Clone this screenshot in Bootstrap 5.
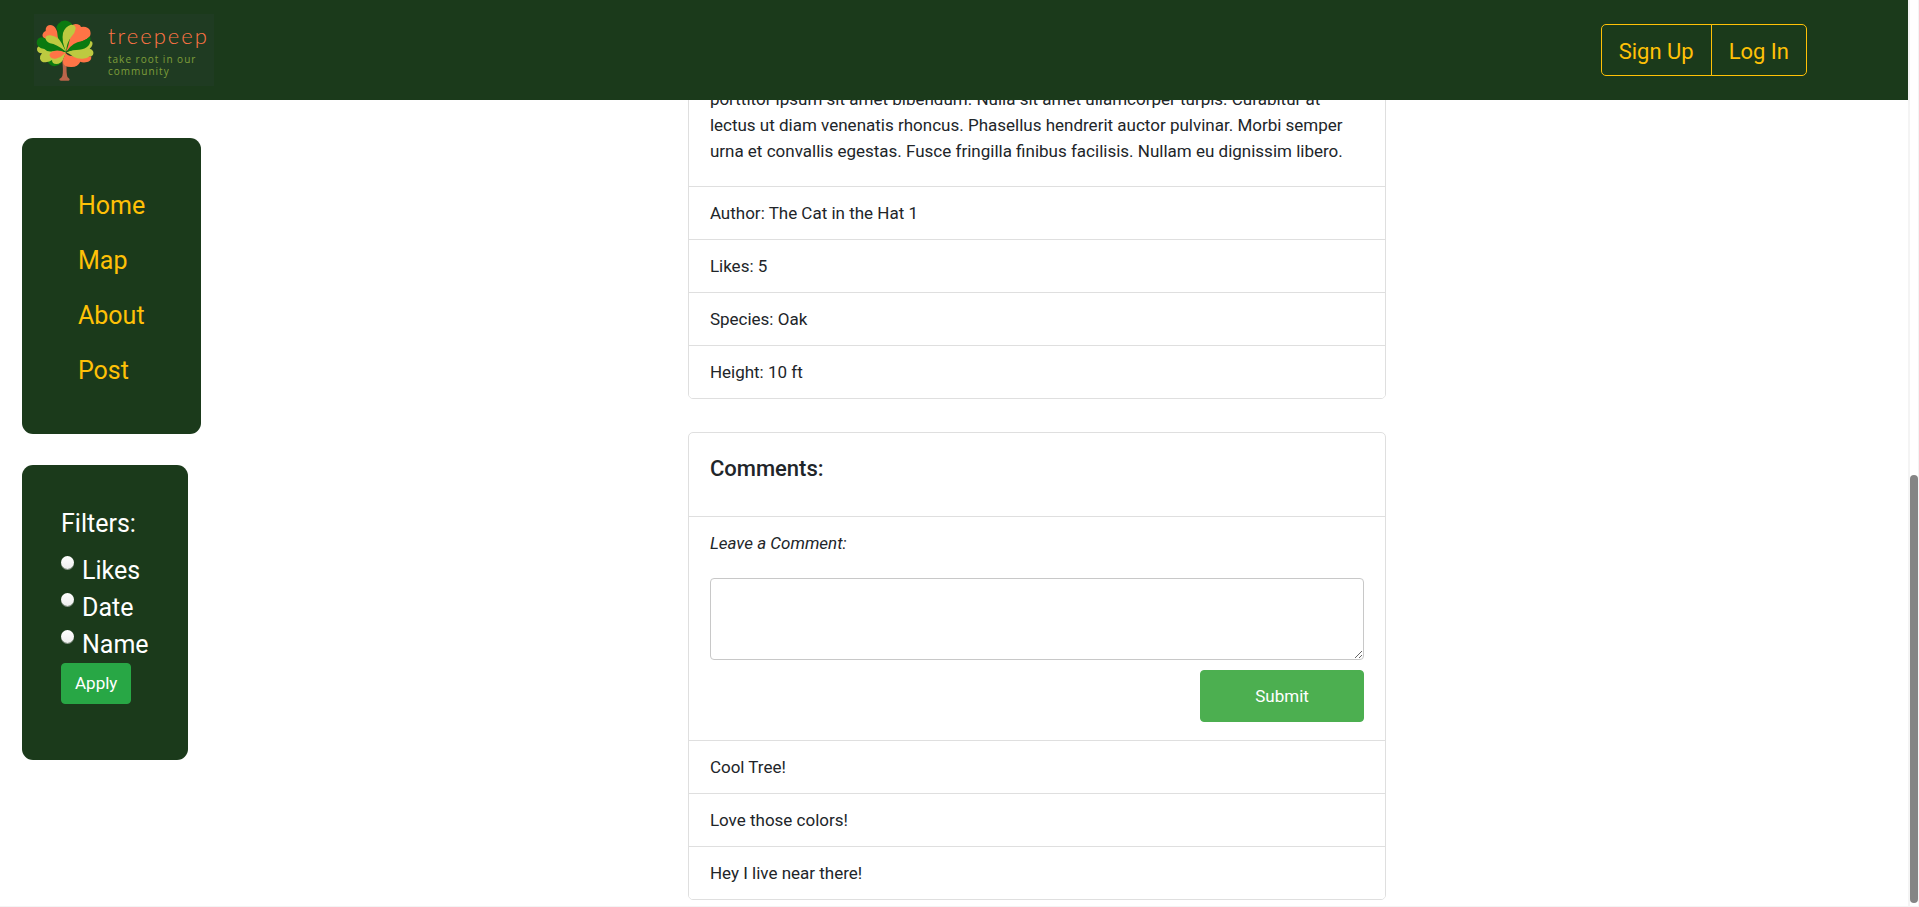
<!DOCTYPE html>
<html lang="en">
<head>
<meta charset="utf-8">
<meta name="viewport" content="width=device-width, initial-scale=1">
<title>treepeep</title>
<link href="https://cdn.jsdelivr.net/npm/bootstrap@5.3.0/dist/css/bootstrap.min.css" rel="stylesheet">
<style>
  body { font-family: Roboto, "Liberation Sans", sans-serif; font-size: 17px; line-height: 26px; color: #212529; }
  .forest { background: #1b3a1b; }
  .page-shell { border-bottom: 1px solid #f4f4f4; }
  .site-header { height: 100px; padding: 0 101px 0 34px; }
  .brand-box { width: 180px; height: 72px; background: #1f3b22; padding-left: 2px; gap: 13px; text-decoration: none; }
  .brand-name { font: 300 22px/26px Lato, sans-serif; letter-spacing: 2px; color: #ff7446; }
  .brand-tag { font: 10px/12px "Open Sans", sans-serif; letter-spacing: 1px; color: #7f9f3a; }
  .btn-account { --bs-btn-color: #ffc107; --bs-btn-border-color: #ffc107; --bs-btn-hover-bg: #ffc107; --bs-btn-hover-border-color: #ffc107;
    --bs-btn-font-size: 22px; --bs-btn-line-height: 32px; --bs-btn-border-radius: 5px; padding: 11px 17px 7px; }
  .side-col { width: 36%; padding: 38px 0 0 22px; gap: 31px; }
  .center-col { width: 37%; gap: 33px; padding: 0 7px 6px 1px; }
  .side-panel { border-radius: 11px; font-size: 25px; line-height: 37px; }
  .side-menu { padding: 40px 56px 36px 56px; }
  .side-menu .nav-link { padding: 9px 0; color: #ffc107; }
  .side-filter { padding: 40px 39px 56px; color: #fff; }
  .filter-title { margin-bottom: 10px; }
  .filter-dot { appearance: none; width: 13px; height: 13px; margin: 4px 8px 0 0; border-radius: 50%; background: linear-gradient(#fff, #eee); box-shadow: 0 1px 0 #8b968b; }
  .btn-apply { --bs-btn-bg: #28a745; --bs-btn-border-color: #28a745; --bs-btn-color: #fff; --bs-btn-hover-bg: #218838; --bs-btn-hover-color: #fff;
    --bs-btn-font-size: 17px; --bs-btn-line-height: 25px; --bs-btn-padding-x: 13px; --bs-btn-padding-y: 7px; --bs-btn-border-radius: 4px; }
  .post-card { --bs-card-border-color: #dfdfdf; --bs-card-border-radius: 5px; --bs-card-inner-border-radius: 4px; --bs-card-spacer-x: 21px; --bs-card-spacer-y: 21px; }
  .post-card .list-group-item { padding: 13px 21px; border-color: #dfdfdf; color: #212529; }
  .post-card .comment-entry { padding-bottom: 18px; }
  .post-text { padding-bottom: 22px; }
  .comment-title { font-size: 22px; line-height: 30px; font-weight: 500; margin-bottom: 11px; }
  .comment-label { margin-bottom: 22px; }
  .comment-box { height: 82px; min-height: 82px; border-color: #c8c8c8; border-radius: 4px; }
  .btn-submit { --bs-btn-bg: #4caf50; --bs-btn-border-color: #4caf50; --bs-btn-color: #fff; --bs-btn-hover-bg: #45a049; --bs-btn-hover-color: #fff;
    --bs-btn-font-size: 17px; --bs-btn-line-height: 26px; --bs-btn-padding-y: 12px; --bs-btn-border-radius: 4px; width: 25%; margin-top: 10px; }
  .scroll-track { width: 11px; border: solid #f4f4f4; border-width: 0 1px 0 2px; padding-bottom: 3px; }
  .scroll-thumb { height: 47.4%; background: #858585; border-radius: 4px; }
</style>
</head>
<body>
<div class="page-shell d-flex vh-100 overflow-hidden">
  <div class="d-flex flex-column flex-grow-1">
    <header class="site-header forest d-flex align-items-center justify-content-between flex-shrink-0">
      <a class="brand-box d-flex align-items-center" href="#">
        <svg width="59" height="61" viewBox="109 56 177 183" aria-hidden="true">
          <path fill="#b9654a" d="M187 172Q192 210 188 224Q186 230 179 233Q178 238 184 238L207 238Q212 236 209 232Q202 230 202 222Q199 205 202 172Z"/>
          <path fill="#ff7446" d="M199 150Q165 120 139 113Q126 109 129 98Q132 91 138 89Q137 73 151 71Q163 71 169 83L191 135Z"/>
          <path fill="#0b7a10" d="M197 151Q168 112 174 88Q166 78 176 67Q188 54 204 59Q215 62 220 73Q218 112 199 150Z"/>
          <path fill="#ff7446" d="M200 150Q213 115 216 73Q226 64 241 72L244 77Q263 73 271 87Q275 99 270 106Q264 113 250 119Q220 129 202 150Z"/>
          <path fill="#bdca40" d="M199 151Q185 119 190 95Q196 75 214 70Q228 69 228 82Q226 96 215 106Q201 124 199 151Z"/>
          <path fill="#0b7a10" d="M143 179Q150 194 164 195Q178 192 186 184L190 168L160 169Z"/>
          <path fill="#bdca40" d="M199 154Q168 135 137 133Q114 131 112 142Q111 154 127 156Q120 163 121 172Q124 184 138 183Q151 182 157 176Q157 188 170 188Q184 187 190 175Z"/>
          <path fill="#0b7a10" d="M199 152Q177 151 158 150Q144 153 134 143Q112 139 111 124Q112 109 126 108Q138 109 146 121Q177 122 199 152Z"/>
          <path fill="#bdca40" d="M199 151Q170 128 151 126Q138 121 137 108Q141 101 152 102Q176 105 186 126Z"/>
          <path fill="#ff7446" d="M198 155Q179 145 163 149Q148 154 150 163Q154 173 168 172Q183 169 198 155Q206 165 222 165L275 165Q276 182 258 183Q247 184 242 181Q234 198 214 197Q190 197 190 181Q190 171 198 155Z"/>
          <path fill="#bdca40" d="M200 153Q230 141 250 134L270 118Q281 119 278 131Q276 138 270 142Q283 146 281 157Q279 165 270 165Q263 172 249 172Q233 173 221 166Q211 158 200 153Z"/>
          <path fill="#0b7a10" d="M200 151Q217 123 248 119Q263 114 271 105Q276 122 266 133Q257 143 238 145Q222 145 200 151Z"/>
        </svg>
        <span class="d-flex flex-column gap-1">
          <span class="brand-name">treepeep</span>
          <span class="brand-tag">take root in our<br>community</span>
        </span>
      </a>
      <div class="btn-group">
        <button type="button" class="btn btn-account">Sign Up</button>
        <button type="button" class="btn btn-account">Log In</button>
      </div>
    </header>

    <main class="d-flex flex-grow-1 overflow-hidden">
      <aside class="side-col d-flex flex-column align-items-start flex-shrink-0">
        <nav class="side-panel side-menu forest nav flex-column">
          <a class="nav-link" href="#">Home</a>
          <a class="nav-link" href="#">Map</a>
          <a class="nav-link" href="#">About</a>
          <a class="nav-link" href="#">Post</a>
        </nav>
        <form class="side-panel side-filter forest">
          <div class="filter-title">Filters:</div>
          <div class="d-flex"><input class="filter-dot" type="radio" name="sort" id="by-likes"><label for="by-likes">Likes</label></div>
          <div class="d-flex"><input class="filter-dot" type="radio" name="sort" id="by-date"><label for="by-date">Date</label></div>
          <div class="d-flex"><input class="filter-dot" type="radio" name="sort" id="by-name"><label for="by-name">Name</label></div>
          <button type="button" class="btn btn-apply d-block">Apply</button>
        </form>
      </aside>

      <div class="center-col d-flex flex-column justify-content-end">
        <article class="post-card card">
          <div class="card-body post-text">
            <p class="mb-0">porttitor ipsum sit amet bibendum. Nulla sit amet ullamcorper turpis. Curabitur at lectus ut diam venenatis rhoncus. Phasellus hendrerit auctor pulvinar. Morbi semper urna et convallis egestas. Fusce fringilla finibus facilisis. Nullam eu dignissim libero.</p>
          </div>
          <ul class="list-group list-group-flush">
            <li class="list-group-item">Author: The Cat in the Hat 1</li>
            <li class="list-group-item">Likes: 5</li>
            <li class="list-group-item">Species: Oak</li>
            <li class="list-group-item">Height: 10 ft</li>
          </ul>
        </article>

        <section class="post-card card">
          <div class="card-body">
            <h5 class="comment-title">Comments:</h5>
          </div>
          <ul class="list-group list-group-flush">
            <li class="list-group-item comment-entry">
              <form class="d-flex flex-column">
                <label class="comment-label fst-italic" for="comment">Leave a Comment:</label>
                <textarea class="form-control comment-box" id="comment"></textarea>
                <button type="button" class="btn btn-submit align-self-end">Submit</button>
              </form>
            </li>
            <li class="list-group-item">Cool Tree!</li>
            <li class="list-group-item">Love those colors!</li>
            <li class="list-group-item">Hey I live near there!</li>
          </ul>
        </section>
      </div>
    </main>
  </div>
  <div class="scroll-track d-flex flex-column justify-content-end flex-shrink-0"><div class="scroll-thumb"></div></div>
</div>
<script src="https://cdn.jsdelivr.net/npm/bootstrap@5.3.0/dist/js/bootstrap.bundle.min.js"></script>
</body>
</html>
